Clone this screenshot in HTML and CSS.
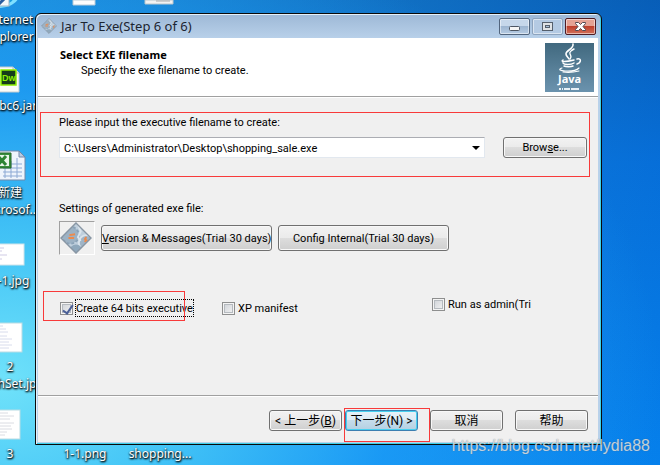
FILE: index.html
```
<!DOCTYPE html>
<html lang="en">
<head>
    <meta charset="UTF-8">
    <meta name="viewport" content="width=device-width, initial-scale=1.0">
    <title>Jar To Exe</title>
    <link rel="stylesheet" href="styles.css">
</head>
<body>
    <div class="desktop">
        <!-- Desktop icons -->
        <div class="shortcut internet">
            <svg width="60" height="16" viewBox="10 0 60 16">
                <path d="M30 0h20c-2 6-7 12-20 13z" fill="#7fe0ff"/>
                <path d="M30 9c7 0 12-4 14-9" fill="none" stroke="#1b9ee0" stroke-width="3"/>
                <rect x="24" y="-2" width="15" height="13" fill="#f4f8fb" stroke="#9db3c4"/>
                <path d="M29 9l6-6" stroke="#2b5c9e" stroke-width="3"/>
            </svg>
            <span>Internet<br>Explorer</span>
        </div>
        <div class="shortcut top-file">
            <svg width="24" height="6" viewBox="0 0 24 6">
                <path d="M1 0h22v5H1z" fill="#fdfdfd" stroke="#b9cbd8"/>
            </svg>
        </div>
        <div class="shortcut top-list">
            <svg width="30" height="5" viewBox="0 0 30 5">
                <path d="M1 0h28v4H1z" fill="#f2f2f2" stroke="#bac6cc"/>
                <path d="M12 1h14" stroke="#aaa"/>
            </svg>
        </div>
        <div class="shortcut jar">
            <svg width="60" height="27" viewBox="14 0 60 27">
                <path d="M20 1h24l6 6v19H20z" fill="#fbfbf8" stroke="#c5ccd0"/>
                <path d="M44 1v6h6" fill="#dde3e6" stroke="#b0b8bc"/>
                <rect x="32" y="4" width="15" height="15" fill="#153d1a" stroke="#8cf000" stroke-width="1.5"/>
                <text x="33" y="15" class="dw">Dw</text>
            </svg>
            <span>jdbc6.jar</span>
        </div>
        <div class="shortcut excel">
            <svg width="60" height="32" viewBox="10 0 60 32">
                <path d="M22 1h27l6 6v23H22z" fill="#eef4fc" stroke="#7288a8"/>
                <path d="M49 1v6h6z" fill="#b9cbe2" stroke="#7288a8"/>
                <path d="M33 14h19M33 18h19M33 22h19M33 26h19M35 11v17M41 11v17M47 8v20" stroke="#8ca9d4" fill="none"/>
                <path d="M22 3h19v15H22z" fill="#398e3d" stroke="#24682a"/>
                <path d="M24 5h15v11H24z" fill="#eaf6ea"/>
                <path d="M28 6l8 9M36 6l-8 9" stroke="#2d8433" stroke-width="3"/>
            </svg>
            <span>新建<br>Microsof...</span>
        </div>
        <div class="shortcut image-one">
            <svg width="60" height="24" viewBox="10 0 60 24">
                <rect x="14" y="1" width="40" height="21" fill="#fff" stroke="#cfe3ea"/>
                <path d="M24 5h10M24 8h8M24 12h13M24 16h8" stroke="#cfcbe4"/>
            </svg>
            <span>1-1.jpg</span>
        </div>
        <div class="shortcut image-two">
            <svg width="60" height="31" viewBox="10 0 60 31">
                <rect x="18" y="1" width="34" height="29" fill="#fff" stroke="#b8dbe3"/>
                <path d="M28 4h5M28 7h8M28 10h10M28 14h9M28 17h14M28 20h11M28 23h14M28 26h11" stroke="#d8dcec"/>
            </svg>
            <span>2<br>HashSet.jpg</span>
        </div>
        <div class="shortcut image-three">
            <svg width="60" height="31" viewBox="10 0 60 31">
                <rect x="18" y="1" width="32" height="29" fill="#fff" stroke="#b8dbe3"/>
                <path d="M28 4h10M28 7h16M28 10h12M28 14h16M28 17h13M28 20h14M28 23h9M28 26h7" stroke="#dadce2"/>
            </svg>
            <span>3</span>
        </div>
        <div class="shortcut png"><span>1-1.png</span></div>
        <div class="shortcut shopping"><span>shopping...</span></div>

        <!-- Wizard window -->
        <div class="window">
            <div class="titlebar">
                <svg class="app-icon" width="16" height="16" viewBox="0 0 34 34">
                    <use href="#gears"/>
                </svg>
                <h1>Jar To Exe(Step 6 of 6)</h1>
                <div class="window-buttons">
                    <button type="button" aria-label="Minimize">
                        <svg width="13" height="11" viewBox="0 0 13 11">
                            <rect x="1.500" y="5.500" width="10" height="4" rx="1" fill="#f5f5f5" stroke="#4d5663"/>
                        </svg>
                    </button>
                    <button type="button" class="maximize" aria-label="Maximize">
                        <svg width="13" height="11" viewBox="0 0 13 11">
                            <rect x="1.500" y="1.500" width="10" height="8" fill="#dfe2e5" stroke="#555f6c"/>
                            <rect x="4.500" y="4.500" width="4" height="2" fill="#a9c0da" stroke="#555f6c"/>
                        </svg>
                    </button>
                    <button type="button" class="close" aria-label="Close">
                        <svg width="13" height="11" viewBox="0 0 13 11">
                            <path d="M1.500 1.500h3l2 2 2-2h3v1L9 5.500l2.500 3v1h-3l-2-2-2 2h-3v-1L4 5.500l-2.500-3z" fill="#fff" stroke="#534a52"/>
                        </svg>
                    </button>
                </div>
            </div>

            <form class="wizard">
                <div class="header">
                    <div>
                        <h2>Select EXE filename</h2>
                        <p>Specify the exe filename to create.</p>
                    </div>
                    <svg class="java-logo" width="49" height="49" viewBox="0 0 49 49">
                        <defs>
                            <linearGradient id="javaFill" x1="0" y1="0" x2="0" y2="1">
                                <stop offset="0" stop-color="#41697f"/>
                                <stop offset="1" stop-color="#6b93ae"/>
                            </linearGradient>
                        </defs>
                        <rect width="49" height="49" fill="url(#javaFill)"/>
                        <g fill="none" stroke="#fff" stroke-linecap="round">
                            <path d="M28 1c1 5-7 6-7 10 0 2 2 3 3 5" stroke-width="1.600"/>
                            <path d="M29 6c-2 1-5 3-4 5s2 2 0 5" stroke-width="1.400"/>
                            <path d="M18 17c-3 2 3 2 11 0M18 20c1 2 8 2 11 0M19 23c2 1 7 1 9 0" stroke-width="1.500"/>
                            <path d="M32 16c5-1 4 4 0 5" stroke-width="1.500"/>
                            <path d="M17 25c-9 3 12 5 17 0M18 29c6 1 12 0 16-1" stroke-width="1.100"/>
                        </g>
                        <text x="13" y="40" class="java-name">Java</text>
                        <path d="M14 46h2m1 0h1m1 0h6m1 0h8" stroke="#e9f1f6" stroke-width="2"/>
                    </svg>
                </div>

                <div class="content">
                    <label class="field-label" for="filename">Please input the executive filename to create:</label>
                    <div class="row file-row">
                        <div class="combo">
                            <select id="filename">
                                <option>C:\Users\Administrator\Desktop\shopping_sale.exe</option>
                            </select>
                        </div>
                        <button type="button" class="btn browse">Brow<u>s</u>e...</button>
                    </div>

                    <p class="settings-label">Settings of generated exe file:</p>
                    <div class="row settings-row">
                        <div class="icon-box">
                            <svg width="32" height="32" viewBox="0 0 34 34">
                                <defs>
                                    <clipPath id="diamond"><path d="M17 1l16 16-16 16L1 17z"/></clipPath>
                                </defs>
                                <g id="gears">
                                    <g clip-path="url(#diamond)">
                                        <path d="M17 1l16 16-16 16L1 17z" fill="#bfcfdd"/>
                                        <circle cx="11" cy="14" r="9" fill="#9db2c4" stroke="#8ba3b8" stroke-width="2" stroke-dasharray="3 2"/>
                                        <circle cx="28" cy="22" r="8" fill="#9fb4c6" stroke="#d9e3ec" stroke-width="2"/>
                                        <circle cx="17" cy="31" r="7" fill="#8fa8bc"/>
                                        <path d="M19 2l3 8-3 6 3 4" stroke="#dbe5ed" stroke-width="2" fill="none"/>
                                        <path d="M10 14l6-1M9 17h6M26 19l2-3M26 21l3-2" stroke="#ed8a4c" stroke-width="2"/>
                                    </g>
                                    <path d="M17 1l16 16-16 16L1 17z" fill="none" stroke="#8896a4" stroke-width="1.500"/>
                                </g>
                            </svg>
                        </div>
                        <button type="button" class="btn tall"><u>V</u>ersion &amp; Messages(Trial 30 days)</button>
                        <button type="button" class="btn tall">Config Internal(Trial 30 days)</button>
                    </div>

                    <div class="options">
                        <label class="option focused"><input type="checkbox" checked><span>Create 64 bits executive</span></label>
                        <label class="option"><input type="checkbox"><span>XP manifest</span></label>
                        <label class="option admin"><input type="checkbox"><span>Run as admin(Tri</span></label>
                    </div>
                </div>

                <div class="footer">
                    <div class="step-buttons">
                        <button type="button" class="btn">&lt; 上一步(<u>B</u>)</button>
                        <button type="button" class="btn default">下一步(N) &gt;</button>
                    </div>
                    <button type="button" class="btn">取消</button>
                    <button type="button" class="btn">帮助</button>
                </div>
            </form>

            <!-- Highlight marks over the window -->
            <div class="mark mark-file"></div>
            <div class="mark mark-option"></div>
            <div class="mark mark-next"></div>
        </div>

        <div class="watermark">https://blog.csdn.net/lydia88</div>
    </div>
</body>
</html>
```
FILE: styles.css
```
/* General Styles */
* {
    box-sizing: border-box;
}

body {
    margin: 0;
    font-family: Roboto, 'Noto Sans CJK SC', sans-serif;
    font-size: 11px;
    line-height: 16px;
    color: #000;
}

h1, h2, p {
    margin: 0;
}

button, select, input {
    font: inherit;
    color: inherit;
    margin: 0;
}

.desktop {
    position: relative;
    min-height: 100vh;
    overflow: hidden;
    background:
        radial-gradient(ellipse 100% 105% at 0 82%, #70e2fa 0, rgba(72, 202, 248, 0.9) 28%, rgba(30, 160, 250, 0.7) 60%, rgba(10, 130, 240, 0) 100%),
        linear-gradient(100deg, rgba(40, 160, 225, 0.7), rgba(10, 110, 210, 0)),
        linear-gradient(#0558b4, #056cd8 35%, #0580ec);
}

/* Desktop Icons */
.shortcut {
    position: absolute;
    width: 80px;
    display: flex;
    flex-direction: column;
    align-items: center;
    color: white;
    font-family: 'Noto Sans', 'Noto Sans CJK SC', sans-serif;
    font-size: 12px;
    line-height: 17px;
    text-align: center;
    text-shadow: 0 1px 2px #000, 1px 1px 2px #000;
}

.shortcut svg {
    display: block;
}

.dw {
    font-family: 'Liberation Sans', sans-serif;
    font-size: 9px;
    font-weight: bold;
    fill: #8cf000;
    text-shadow: none;
}

.internet {
    left: -30px;
    top: -5px;
}

.top-file {
    left: 44px;
    top: 0;
}

.top-list {
    left: 119px;
    top: 0;
}

.jar {
    left: -27px;
    top: 66px;
    gap: 4px;
}

.excel {
    left: -30px;
    top: 150px;
    gap: 2px;
}

.image-one {
    left: -30px;
    top: 243px;
    gap: 5px;
}

.image-two {
    left: -30px;
    top: 322px;
    gap: 5px;
}

.image-three {
    left: -30px;
    top: 409px;
    gap: 5px;
}

.png {
    left: 45px;
    top: 445px;
}

.shopping {
    left: 120px;
    top: 445px;
}

/* Window */
.window {
    position: absolute;
    left: 35px;
    right: 58px;
    top: 13px;
    padding: 0 3px 2px 2px;
    border: 1px solid #0a0a0a;
    border-radius: 6px 6px 0 0;
    background: linear-gradient(#9db8d6, #b9d1ea 25px);
    box-shadow: inset 1px 1px 0 #e4f1fb, inset -1px -1px 0 #3fd0e8;
}

.titlebar {
    display: flex;
    align-items: center;
    height: 24px;
    padding: 0 2px 0 3px;
}

.app-icon {
    margin-right: 4px;
}

.titlebar h1 {
    flex: 1;
    font-family: 'Noto Sans', sans-serif;
    font-size: 13px;
    font-weight: normal;
    color: #1c2430;
}

.window-buttons {
    display: flex;
    gap: 2px;
}

.window-buttons button {
    display: flex;
    align-items: center;
    justify-content: center;
    width: 31px;
    height: 17px;
    padding: 0;
    border: 1px solid #52657d;
    border-radius: 2px;
    background: linear-gradient(#c6d7ea 48%, #9db5d0 50%, #b6cce4);
    box-shadow: inset 0 0 0 1px rgba(255, 255, 255, 0.5);
}

.window-buttons .maximize {
    border-color: #8da3bd;
    background: #b4cae3;
}

.window-buttons .close {
    border-color: #4e1c24;
    background: linear-gradient(#e5a294 48%, #be3f2c 50%, #d2705a);
}

/* Header */
.wizard {
    background: #f0f0f0;
}

.header {
    display: flex;
    justify-content: space-between;
    padding: 5px 4px 4px 22px;
    background: white;
    border-bottom: 1px solid #a0a0a0;
}

.header h2 {
    padding-top: 4px;
    font-family: 'Noto Sans', sans-serif;
    font-size: 11px;
    line-height: 16px;
}

.header p {
    padding-left: 21px;
    line-height: 16px;
}

.java-logo {
    display: block;
}

.java-name {
    font-family: 'Noto Sans', sans-serif;
    font-size: 11px;
    font-weight: bold;
    fill: white;
}

/* Content */
.content {
    min-height: 298px;
    padding: 17px 11px 0 21px;
    border-top: 1px solid white;
}

.field-label {
    display: block;
}

.row {
    display: flex;
    align-items: center;
}

.file-row {
    justify-content: space-between;
    gap: 18px;
    margin-top: 6px;
}

.combo {
    position: relative;
    flex: 1;
}

.combo select {
    display: block;
    appearance: none;
    width: 100%;
    height: 21px;
    padding: 2px 20px 0 4px;
    border: 1px solid #e2e8ef;
    border-top-color: #abadb3;
    border-radius: 0;
    background: white;
}

.combo::after {
    content: "";
    position: absolute;
    right: 5px;
    top: 9px;
    border: 4px solid transparent;
    border-top-color: #000;
    border-bottom: 0;
    pointer-events: none;
}

.btn {
    width: 73px;
    height: 21px;
    padding: 1px 0 0;
    border: 1px solid #707070;
    border-radius: 3px;
    background: linear-gradient(#f2f2f2, #ebebeb 48%, #dddddd 50%, #cfcfcf);
    box-shadow: inset 0 0 0 1px #f8f8f8;
    line-height: 16px;
    white-space: nowrap;
}

.browse {
    width: 84px;
}

.settings-label {
    margin-top: 43px;
}

.settings-row {
    gap: 6px;
    margin-top: 4px;
}

.icon-box {
    display: flex;
    width: 36px;
    height: 34px;
    border: 1px solid #a0a0a0;
    border-right-color: white;
    border-bottom-color: white;
}

.tall {
    width: 171px;
    height: 26px;
}

.options {
    display: grid;
    grid-template-columns: 162px 210px 1fr;
    margin-top: 45px;
    padding-left: 1px;
}

.option {
    display: flex;
    align-items: center;
    gap: 3px;
    white-space: nowrap;
}

.option input {
    appearance: none;
    position: relative;
    width: 13px;
    height: 13px;
    border: 1px solid #8e8f8f;
    background: linear-gradient(135deg, #cbcfd5, #f6f6f6);
    box-shadow: inset 0 0 0 1px #f4f4f4, inset 0 0 0 2px #b5babf;
}

.option input:checked::after {
    content: "";
    position: absolute;
    left: 4px;
    top: 0;
    width: 4px;
    height: 9px;
    border: solid #4a5f97;
    border-width: 0 2px 2px 0;
    transform: rotate(35deg);
}

.option span {
    padding-top: 2px;
    line-height: 14px;
}

.focused span {
    outline: 1px dotted #000;
}

.admin {
    margin-top: -8px;
}

/* Footer */
.footer {
    display: flex;
    justify-content: flex-end;
    gap: 12px;
    padding: 14px 10px 11px;
    border-top: 1px solid #a0a0a0;
    box-shadow: inset 0 1px 0 white;
}

.footer .btn {
    font-size: 12px;
}

.step-buttons {
    display: flex;
    gap: 3px;
}

.footer .default {
    border-color: #3c7fb1;
    background: linear-gradient(#e8f2f8, #dcebf5 48%, #c5dceb 50%, #b4d0e2);
    box-shadow: inset 0 0 0 1px #48d0f0;
}

/* Highlight Marks */
.mark {
    position: absolute;
    border: 1px solid #f83a3a;
    pointer-events: none;
}

.mark-file {
    left: 4px;
    right: 11px;
    top: 98px;
    height: 65px;
}

.mark-option {
    left: 7px;
    top: 277px;
    width: 142px;
    height: 30px;
}

.mark-next {
    right: 171px;
    bottom: 2px;
    width: 86px;
    height: 34px;
}

.watermark {
    position: absolute;
    right: 10px;
    top: 436px;
    font-family: 'Liberation Sans', sans-serif;
    font-size: 16px;
    line-height: 20px;
    color: rgba(255, 255, 255, 0.7);
    text-shadow: 0 0 1px rgba(80, 90, 100, 0.8);
}
```
